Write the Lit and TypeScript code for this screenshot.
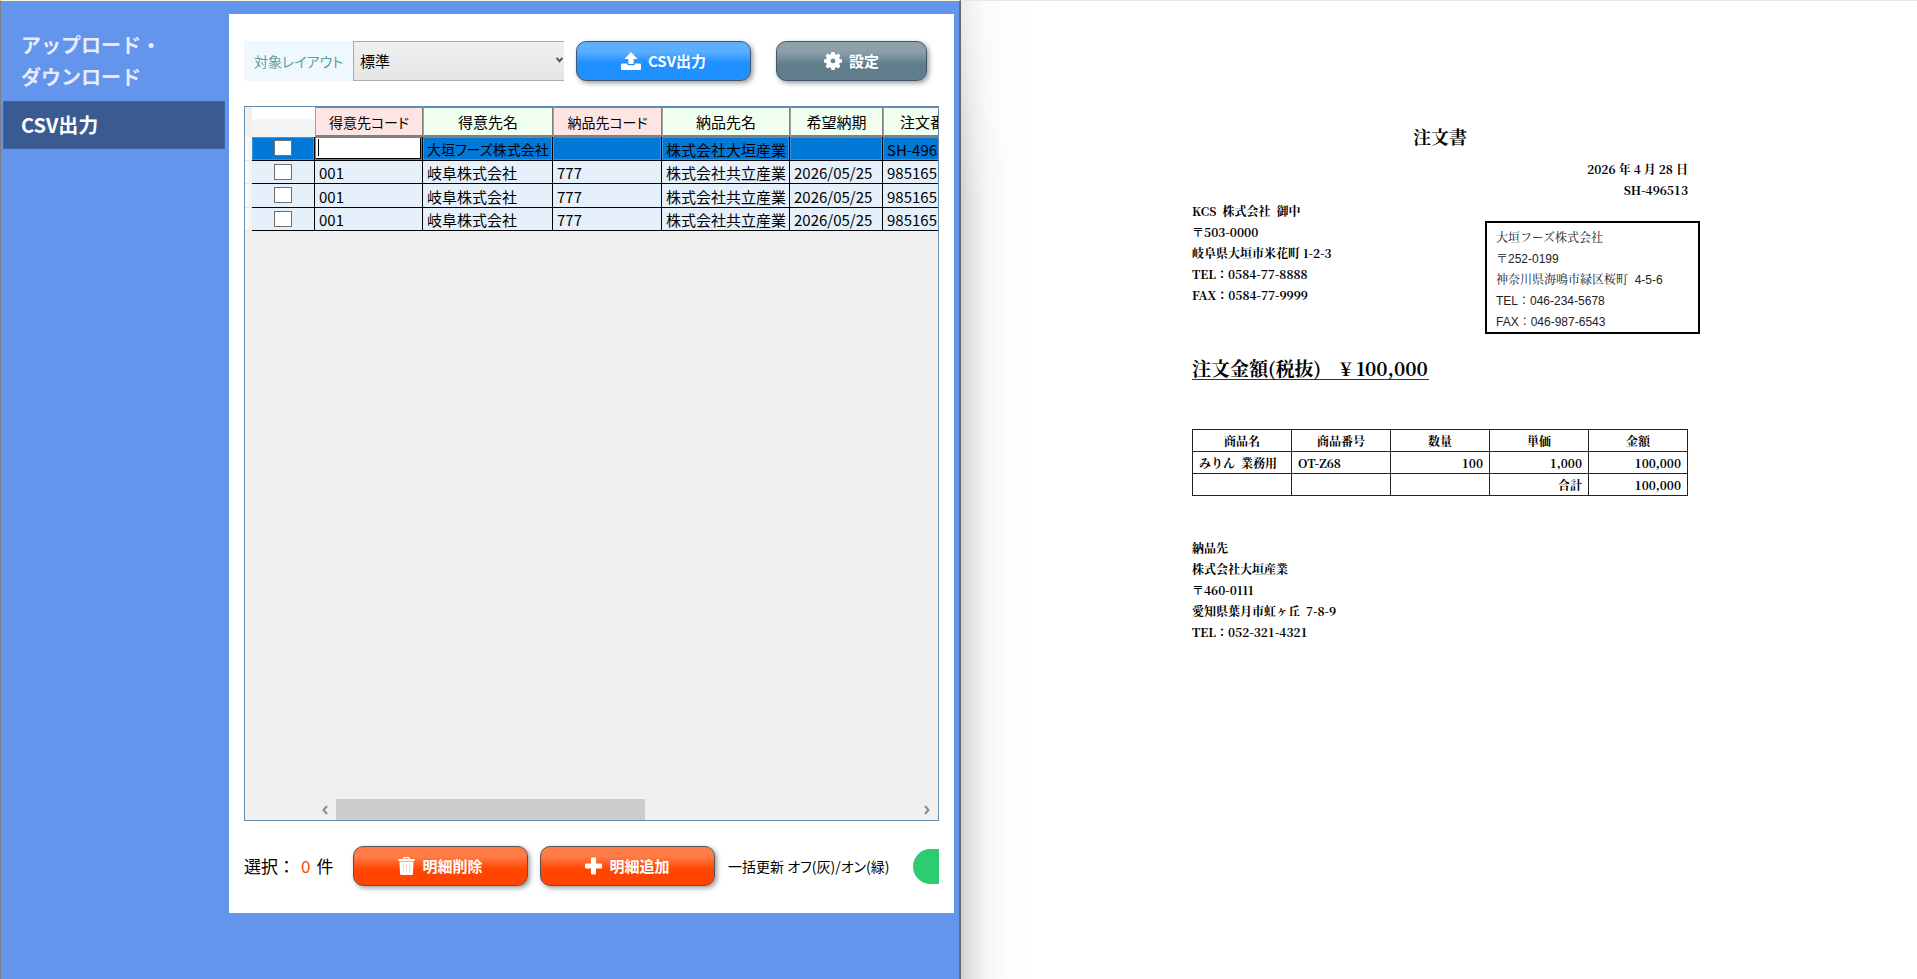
import { LitElement, html, css, svg } from "lit";
import { customElement, state } from "lit/decorators.js";

interface DetailRow {
  code: string;
  name: string;
  shipCode: string;
  shipName: string;
  due: string;
  order: string;
}

const columns = [
  { label: "得意先コード", tone: "key" },
  { label: "得意先名", tone: "plain" },
  { label: "納品先コード", tone: "key" },
  { label: "納品先名", tone: "plain" },
  { label: "希望納期", tone: "plain" },
  { label: "注文番号", tone: "plain" },
];

const repeated: DetailRow = {
  code: "001",
  name: "岐阜株式会社",
  shipCode: "777",
  shipName: "株式会社共立産業",
  due: "2026/05/25",
  order: "98516516",
};

const rows: DetailRow[] = [
  { code: "", name: "大垣フーズ株式会社", shipCode: "", shipName: "株式会社大垣産業", due: "", order: "SH-496513" },
  repeated,
  repeated,
  repeated,
];

const uploadIcon = svg`<path d="M10 0 16.500 7H12.600V12H7.400V7H3.500Z"/><path d="M0 12.500Q0 11.500 1 11.500H6.200V12.200Q6.200 13.300 7.300 13.300H12.700Q13.800 13.300 13.800 12.200V11.500H19Q20 11.500 20 12.500V17Q20 18 19 18H1Q0 18 0 17Z"/>`;
const gearIcon = svg`<path fill-rule="evenodd" d="M7.200 0h3.600l.5 2.500 1.400.6 2.100-1.500 2.500 2.600-1.400 2.100.6 1.400 2.500.5v3.600l-2.500.5-.6 1.400 1.400 2.100-2.500 2.500-2.100-1.400-1.400.6-.5 2.500H7.200l-.5-2.500-1.400-.6-2.100 1.400-2.500-2.500 1.400-2.100-.6-1.400L-1 11.800V8.200l2.500-.5.6-1.400L.7 4.200l2.500-2.600 2.100 1.500 1.400-.6ZM9 7.200a2.700 2.700 0 1 0 0 5.400 2.700 2.700 0 0 0 0-5.400Z"/>`;
const trashIcon = svg`<path d="M5 2V1.500Q5 0 6.500 0h4Q12 0 12 1.500V2h4.500v2H.5V2Zm1.500 0h4v-.7h-4Z"/><path d="M1.500 4.500h14L15 16.500Q15 18 13.500 18h-10Q2 18 2 16.500Z"/><path d="M5.500 6.500v9M8.500 6.500v9M11.500 6.500v9" stroke="#ffd9cc" stroke-width="1"/>`;
const plusIcon = svg`<path d="M6 1Q6 0 7 0h3q1 0 1 1v5h5q1 0 1 1v3q0 1-1 1h-5v5q0 1-1 1H7q-1 0-1-1v-5H1q-1 0-1-1V7q0-1 1-1h5Z"/>`;

@customElement("csv-panel")
class CsvPanel extends LitElement {
  static styles = css`
    :host {
      display: flex;
      flex-direction: column;
      min-width: 0;
      padding: 27px 15px;
      box-sizing: border-box;
      background: #fff;
      color: #000;
      font: 15px/20px "Noto Sans CJK JP", sans-serif;
      font-feature-settings: "palt";
    }
    .bar {
      display: flex;
      flex: none;
      align-items: center;
      height: 40px;
    }
    .target {
      flex: none;
      width: 109px;
      font-size: 14px;
      line-height: 40px;
      text-align: center;
      color: #5f9ea0;
      background: #f0f8ff;
    }
    .pick {
      position: relative;
      flex: none;
      width: 211px;
      height: 40px;
    }
    .select {
      width: 100%;
      height: 100%;
      box-sizing: border-box;
      appearance: none;
      margin: 0;
      padding: 0 6px;
      border: 1px solid #acacac;
      border-right: 0;
      border-radius: 0;
      background: linear-gradient(#f0f0f0, #e5e5e5);
      color: #000;
      font: inherit;
    }
    .chevron {
      position: absolute;
      right: 1px;
      top: 16px;
      width: 7px;
      height: 6px;
      pointer-events: none;
    }
    .button {
      display: flex;
      flex: none;
      align-items: center;
      justify-content: center;
      gap: 7px;
      width: 175px;
      height: 40px;
      box-sizing: border-box;
      margin: 0;
      padding: 0;
      border: 1px solid #44546a;
      border-radius: 10px;
      box-shadow: 2px 2px 5px rgba(0, 0, 0, 0.4);
      color: #fff;
      font: bold 15px/20px "Noto Sans CJK JP", sans-serif;
      font-feature-settings: "palt";
    }
    .blue {
      margin-left: 12px;
      background: linear-gradient(#5eaeff 0, #5eaeff 25%, #1e90ff 55%, #1e90ff);
    }
    .slate {
      width: 151px;
      margin-left: 25px;
      background: linear-gradient(#8fa1ac 0, #8c9fa9 25%, #607d8b 60%, #607d8b);
    }
    .orange {
      border-color: #555;
      background: linear-gradient(#ff7b47 0, #ff7b47 25%, #ff4500 60%, #ff4500);
    }
    .icon {
      flex: none;
      height: 18px;
      fill: currentColor;
      overflow: visible;
    }
    .viewer {
      display: flex;
      flex: 1;
      flex-direction: column;
      min-height: 0;
      margin: 25px 0;
      border: 1px solid #688caf;
      background: #f0f0f0;
      overflow: hidden;
    }
    .scroll {
      flex: 1;
      min-height: 0;
      overflow: hidden;
    }
    .table {
      table-layout: fixed;
      width: 732px;
      border-collapse: separate;
      border-spacing: 0;
    }
    .col-mark { width: 7px; }
    .col-check { width: 63px; }
    .col-code { width: 108px; }
    .col-name { width: 130px; }
    .col-ship { width: 109px; }
    .col-shipname { width: 128px; }
    .col-due { width: 93px; }
    .th {
      height: 30px;
      box-sizing: border-box;
      padding: 0;
      border: 1px solid #808080;
      border-left-color: #a0a0a0;
      border-bottom-width: 2px;
      font-weight: 400;
      white-space: nowrap;
      overflow: hidden;
    }
    .key { background: #ffe4e4; font-size: 14px; }
    .plain { background: #f0fff0; }
    .blank {
      border: 0;
      background: linear-gradient(#fff 40%, #f3f4f6 42%, #f3f4f6);
    }
    .corner { padding: 0; border: 0; background: #f0f0f0; }
    .mark {
      padding: 0;
      border-bottom: 1px solid #e4e4e4;
      background: linear-gradient(90deg, #fff, #f0f0f0);
    }
    .td {
      height: 23px;
      box-sizing: border-box;
      padding: 1px 2px 0 4px;
      border-right: 1px solid #000;
      border-bottom: 1px solid #000;
      background: #e5f0fa;
      line-height: 21px;
      white-space: nowrap;
      overflow: hidden;
    }
    .row:nth-child(odd) .td { height: 24px; }
    .td.check { padding: 0; text-align: center; }
    .chosen .td {
      background: #0078d7;
      box-shadow: inset 0 0 0 1px #3b93dc;
    }
    .chosen .name { font-size: 14px; }
    .box {
      display: block;
      appearance: none;
      width: 18px;
      height: 16px;
      box-sizing: border-box;
      margin: 0 auto 1px;
      border: 1px solid #707070;
      background: #fff;
    }
    .chosen .edit {
      padding: 1px 2px 2px 1px;
      background: #000;
    }
    .input {
      display: block;
      width: 100%;
      height: 20px;
      box-sizing: border-box;
      padding: 0 3px;
      border: 0;
      border-radius: 0;
      outline: 0;
      background: linear-gradient(#000, #000) 2px 1px / 1px 17px no-repeat #fff;
      font: inherit;
    }
    .track {
      display: grid;
      flex: none;
      grid-template-columns: 23px 309px 1fr 23px;
      height: 21px;
      padding-left: 68px;
      align-items: center;
    }
    .thumb { height: 21px; background: #cdcdcd; }
    .arrow { width: 6px; height: 10px; justify-self: center; }
    .right { grid-column: 4; }
    .line { fill: none; stroke: #8a8a8a; stroke-width: 2; }
    .dark { stroke: #555; }
    .count {
      display: flex;
      flex: none;
      gap: 6px;
      width: 109px;
      font-size: 17px;
      line-height: 24px;
      font-feature-settings: normal;
    }
    .number { color: #ff4500; }
    .next { margin-left: 12px; }
    .switch-label { flex: none; margin-left: 13px; font-size: 14px; white-space: nowrap; }
    .clip {
      display: flex;
      flex: none;
      width: 26px;
      margin-left: auto;
      overflow: hidden;
    }
    .switch {
      flex: none;
      appearance: none;
      width: 70px;
      height: 35px;
      margin: 0;
      border-radius: 18px;
      background: #2ecc71;
    }
  `;

  @state() private selected = 0;

  private count() {
    this.selected = this.renderRoot.querySelectorAll(".box:checked").length;
  }

  private renderRow(row: DetailRow, index: number) {
    return html`<tr class="row ${index === 0 ? "chosen" : ""}">
      <td class="mark"></td>
      <td class="td check"><input class="box" type="checkbox" aria-label="${index + 1}" @change=${this.count} /></td>
      ${index === 0
        ? html`<td class="td edit"><input class="input" type="text" aria-label="得意先コード" .value=${row.code} /></td>`
        : html`<td class="td">${row.code}</td>`}
      <td class="td name">${row.name}</td>
      <td class="td">${row.shipCode}</td>
      <td class="td">${row.shipName}</td>
      <td class="td">${row.due}</td>
      <td class="td">${row.order}</td>
    </tr>`;
  }

  render() {
    return html`
      <div class="bar">
        <label class="target" for="layout">対象レイアウト</label>
        <div class="pick">
          <select class="select" id="layout"><option>標準</option></select>
          <svg class="chevron" viewBox="0 0 7 6"><path class="line dark" d="M.7 1 3.500 4.300 6.300 1" /></svg>
        </div>
        <button class="button blue"><svg class="icon" width="20" viewBox="0 0 20 18">${uploadIcon}</svg>CSV出力</button>
        <button class="button slate"><svg class="icon" width="18" viewBox="-1 0 20 20">${gearIcon}</svg>設定</button>
      </div>
      <div class="viewer">
        <div class="scroll">
          <table class="table">
            <colgroup>
              <col class="col-mark" /><col class="col-check" /><col class="col-code" /><col class="col-name" />
              <col class="col-ship" /><col class="col-shipname" /><col class="col-due" /><col />
            </colgroup>
            <thead>
              <tr>
                <td class="corner"></td>
                <td class="th blank"></td>
                ${columns.map((c) => html`<th class="th ${c.tone}">${c.label}</th>`)}
              </tr>
            </thead>
            <tbody>${rows.map((r, i) => this.renderRow(r, i))}</tbody>
          </table>
        </div>
        <div class="track">
          <svg class="arrow" viewBox="0 0 6 10"><path class="line" d="M5 1 1.500 5 5 9" /></svg>
          <div class="thumb"></div>
          <svg class="arrow right" viewBox="0 0 6 10"><path class="line" d="M1 1 4.500 5 1 9" /></svg>
        </div>
      </div>
      <div class="bar">
        <div class="count"><span>選択：</span><span class="number">${this.selected}</span><span>件</span></div>
        <button class="button orange"><svg class="icon" width="17" viewBox="0 0 17 18">${trashIcon}</svg>明細削除</button>
        <button class="button orange next"><svg class="icon" width="17" viewBox="0 0 17 17">${plusIcon}</svg>明細追加</button>
        <label class="switch-label" for="bulk">一括更新 オフ(灰)/オン(緑)</label>
        <div class="clip"><input class="switch" id="bulk" type="checkbox" checked /></div>
      </div>
    `;
  }
}

@customElement("order-sheet")
class OrderSheet extends LitElement {
  static styles = css`
    :host {
      display: flex;
      justify-content: center;
      padding: 123px 0 0 2px;
      box-sizing: border-box;
      color: #000;
      background:
        linear-gradient(rgba(255, 255, 255, 0.6), rgba(255, 255, 255, 0) 200px),
        linear-gradient(90deg, #cfcfcf 0, #e4e4e4 10px, #f5f5f5 25px, #fdfdfd 45px, #fff 70px);
      border-top: 1px solid #e8e8e8;
      font: bold 12px/21px "Noto Serif CJK JP", "Noto Sans CJK JP", serif;
    }
    .sheet { width: 496px; }
    .title { margin: 0; font-size: 18px; line-height: 24px; text-align: center; }
    .meta { margin-top: 10px; text-align: right; }
    .parties { display: flex; justify-content: space-between; white-space: pre; }
    .sender {
      width: 215px;
      height: 113px;
      box-sizing: border-box;
      margin: 21px -12px 0 0;
      padding: 5px 9px 0;
      border: 2px solid #000;
      font: 12px/21px "Liberation Sans", "Noto Serif CJK JP", "Noto Sans CJK JP", sans-serif;
      color: #222;
    }
    .amount {
      display: inline-block;
      min-width: 237px;
      margin-top: 22px;
      box-sizing: border-box;
      border-bottom: 1px solid #333;
      font-size: 19px;
      line-height: 23px;
      white-space: pre;
    }
    .items {
      width: 100%;
      margin-top: 48px;
      table-layout: fixed;
      border-collapse: collapse;
    }
    .cell {
      height: 22px;
      box-sizing: border-box;
      padding: 0 6px;
      border: 1px solid #222;
      line-height: 20px;
      text-align: left;
      white-space: pre;
    }
    .head { text-align: center; }
    .num { text-align: right; }
    .ship { margin-top: 41px; white-space: pre; }
  `;

  render() {
    const lines = (list: string[]) => list.map((t) => html`<div>${t}</div>`);
    return html`<article class="sheet">
      <h1 class="title">注文書</h1>
      <div class="meta">${lines(["2026 年 4 月 28 日", "SH-496513"])}</div>
      <div class="parties"><div>${lines(["KCS  株式会社  御中", "〒503-0000", "岐阜県大垣市米花町 1-2-3", "TEL：0584-77-8888", "FAX：0584-77-9999"])}</div><div class="sender">${lines(["大垣フーズ株式会社", "〒252-0199", "神奈川県海鳴市緑区桜町  4-5-6", "TEL：046-234-5678", "FAX：046-987-6543"])}</div></div>
      <div class="amount">注文金額(税抜)　¥ 100,000</div>
      <table class="items">
        <thead>
          <tr>${["商品名", "商品番号", "数量", "単価", "金額"].map((t) => html`<th class="cell head">${t}</th>`)}</tr>
        </thead>
        <tbody>
          <tr>
            <td class="cell">みりん  業務用</td><td class="cell">OT-Z68</td><td class="cell num">100</td>
            <td class="cell num">1,000</td><td class="cell num">100,000</td>
          </tr>
          <tr>
            <td class="cell"></td><td class="cell"></td><td class="cell"></td>
            <td class="cell num">合計</td><td class="cell num">100,000</td>
          </tr>
        </tbody>
      </table>
      <div class="ship">${lines(["納品先", "株式会社大垣産業", "〒460-0111", "愛知県葉月市虹ヶ丘  7-8-9", "TEL：052-321-4321"])}</div>
    </article>`;
  }
}

@customElement("app-root")
class AppRoot extends LitElement {
  static styles = css`
    :host {
      display: grid;
      grid-template-columns: minmax(0, 961fr) minmax(0, 956fr);
      height: 100vh;
      overflow: hidden;
    }
    .work {
      display: grid;
      grid-template-columns: 228px minmax(0, 1fr);
      box-sizing: border-box;
      border-top: 1px solid #f5f5dc;
      border-left: 1px solid #808080;
      border-right: 2px solid #696969;
      background: #6495ed;
    }
    .nav {
      display: flex;
      flex-direction: column;
      padding: 28px 0 0 2px;
      font: bold 20px/32px "Noto Sans CJK JP", sans-serif;
    }
    .link {
      padding: 0 18px;
      color: #e6ecfb;
      text-decoration: none;
    }
    .current {
      width: 222px;
      box-sizing: border-box;
      margin-top: 8px;
      padding: 7px 17px;
      border: 1px solid #3f66ad;
      color: #fff;
      background: #3a5a92;
    }
    .panel { margin: 13px 5px 66px 0; }
  `;

  render() {
    return html`
      <div class="work">
        <nav class="nav">
          <a class="link" href="#upload">アップロード・<br />ダウンロード</a>
          <a class="link current" href="#csv" aria-current="page">CSV出力</a>
        </nav>
        <csv-panel class="panel"></csv-panel>
      </div>
      <order-sheet></order-sheet>
    `;
  }
}
